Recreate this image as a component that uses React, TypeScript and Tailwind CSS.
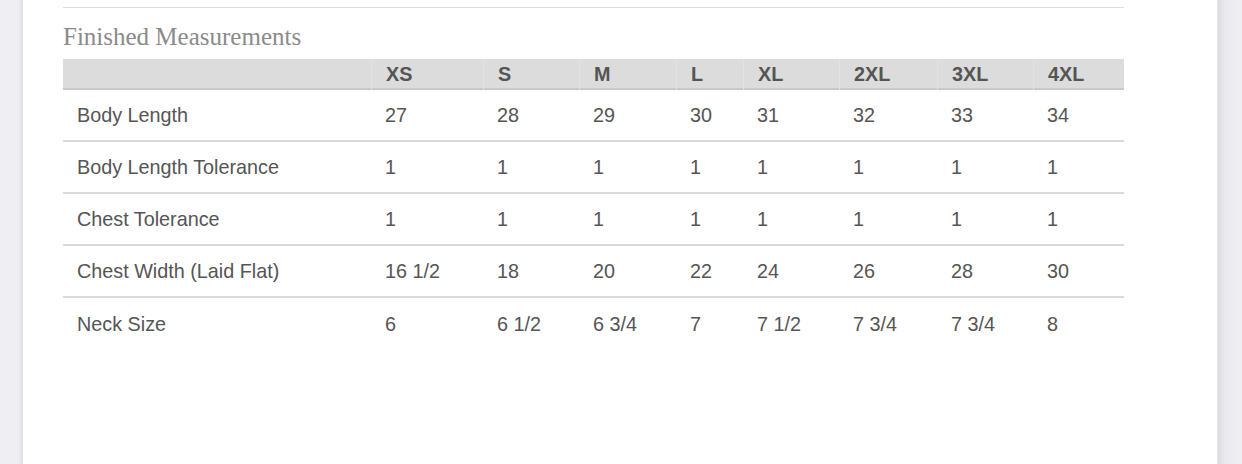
import React from "react";

const sizes = ["XS", "S", "M", "L", "XL", "2XL", "3XL", "4XL"];

const rows: { label: string; values: string[] }[] = [
  { label: "Body Length", values: ["27", "28", "29", "30", "31", "32", "33", "34"] },
  { label: "Body Length Tolerance", values: ["1", "1", "1", "1", "1", "1", "1", "1"] },
  { label: "Chest Tolerance", values: ["1", "1", "1", "1", "1", "1", "1", "1"] },
  { label: "Chest Width (Laid Flat)", values: ["16 1/2", "18", "20", "22", "24", "26", "28", "30"] },
  { label: "Neck Size", values: ["6", "6 1/2", "6 3/4", "7", "7 1/2", "7 3/4", "7 3/4", "8"] },
];

const cols = "grid grid-cols-[308px_112px_96px_97px_67px_96px_98px_96px_91px]";

const App: React.FC = () => {
  return (
    <div className="flex w-[1242px] h-[464px] overflow-hidden bg-white font-['Liberation_Sans',Arial,sans-serif]">
      {/* left backdrop */}
      <div className="w-[23px] h-full bg-gradient-to-r from-[#efeff3] from-80% to-[#dedee2]" />

      {/* Card */}
      <div className="flex-1 h-full bg-white border-r border-[#e6e6e6] pl-[40px] pt-[7px]">
        <div className="w-[1061px] border-t border-[#dedede]">
          <h2 className="mt-[16px] mb-[9px] leading-[26px] text-[25px] text-[#8a8a8a] font-['Liberation_Serif','Times_New_Roman',serif]">
            Finished Measurements
          </h2>

          {/* Header */}
          <div className={`${cols} h-[31px] bg-[#dcdcdc] border-b-2 border-[#c9c9c9] text-[19.8px] font-bold text-[#555]`}>
            <div />
            {sizes.map((s) => (
              <div key={s} className="flex items-center pl-[14px] pt-[1px] border-l border-[#e2e2e2]">
                {s}
              </div>
            ))}
          </div>

          {/* Rows */}
          {rows.map((r, i) => (
            <div
              key={r.label}
              className={`${cols} h-[52px] text-[19.8px] text-[#555] ${
                i < rows.length - 1 ? "border-b-2 border-[#d9d9d9]" : ""
              }`}
            >
              <div className="flex items-center pl-[14px] pt-[2px]">{r.label}</div>
              {r.values.map((v, j) => (
                <div key={j} className="flex items-center pl-[14px] pt-[2px]">
                  {v}
                </div>
              ))}
            </div>
          ))}
        </div>
      </div>

      {/* right backdrop */}
      <div className="w-[24px] h-full bg-gradient-to-r from-[#dcdce0] via-[#ebebef] via-30% to-[#efeff3]" />
    </div>
  );
};

export default App;
